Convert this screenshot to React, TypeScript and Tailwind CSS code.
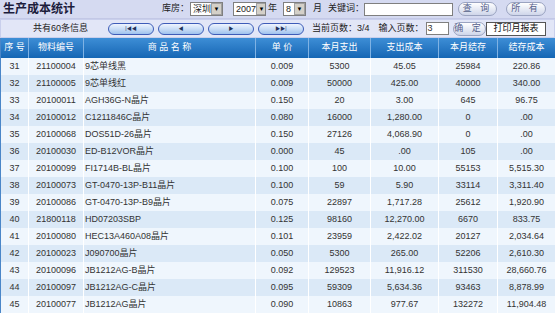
import React from 'react';

type Row = [number, string, string, string, string, string, string, string];

const rows: Row[] = [
  [31, '21100004', '9芯单线黑', '0.009', '5300', '45.05', '25984', '220.86'],
  [32, '21100005', '9芯单线红', '0.009', '50000', '425.00', '40000', '340.00'],
  [33, '20100011', 'AGH36G-N晶片', '0.150', '20', '3.00', '645', '96.75'],
  [34, '20100012', 'C1211846C晶片', '0.080', '16000', '1,280.00', '0', '.00'],
  [35, '20100068', 'DOS51D-26晶片', '0.150', '27126', '4,068.90', '0', '.00'],
  [36, '20100030', 'ED-B12VOR晶片', '0.000', '45', '.00', '105', '.00'],
  [37, '20100099', 'FI1714B-BL晶片', '0.100', '100', '10.00', '55153', '5,515.30'],
  [38, '20100073', 'GT-0470-13P-B11晶片', '0.100', '59', '5.90', '33114', '3,311.40'],
  [39, '20100086', 'GT-0470-13P-B9晶片', '0.075', '22897', '1,717.28', '25612', '1,920.90'],
  [40, '21800118', 'HD07203SBP', '0.125', '98160', '12,270.00', '6670', '833.75'],
  [41, '20100080', 'HEC13A460A08晶片', '0.101', '23959', '2,422.02', '20127', '2,034.64'],
  [42, '20100023', 'J090700晶片', '0.050', '5300', '265.00', '52206', '2,610.30'],
  [43, '20100096', 'JB1212AG-B晶片', '0.092', '129523', '11,916.12', '311530', '28,660.76'],
  [44, '20100097', 'JB1212AG-C晶片', '0.095', '59309', '5,634.36', '93463', '8,878.99'],
  [45, '20100077', 'JB1212AG晶片', '0.090', '10863', '977.67', '132272', '11,904.48'],
];

const heads = ['序 号', '物料编号', '商 品 名 称', '单 价', '本月支出', '支出成本', '本月结存', '结存成本'];
const widths = ['w-[28px]', 'w-[55px]', 'w-[172px]', 'w-[53px]', 'w-[62px]', 'w-[68px]', 'w-[59px]', 'w-[58px]'];

const Select = ({ value, w }: { value: string; w: string }) => (
  <div className={`flex h-[14px] ${w} shrink-0 items-center overflow-hidden whitespace-nowrap border border-[#7f7f7f] bg-white`}>
    <span className="flex-1 pl-[2px] leading-none">{value}</span>
    <span className="flex h-[12px] w-[11px] shrink-0 items-center justify-center border border-[#a0a0a0] bg-[#d4d0c8] text-[6px] text-black">▼</span>
  </div>
);

const PillBtn = ({ children, w }: { children: React.ReactNode; w: string }) => (
  <div className={`flex h-[14px] ${w} items-center justify-center whitespace-nowrap rounded-full border border-[#9aa3c0] bg-gradient-to-b from-[#ffffff] to-[#cfd6ea] text-[#55608a] tracking-[3px]`}>
    {children}
  </div>
);

const NavBtn = ({ icon }: { icon: string }) => (
  <div className="flex h-[12px] w-[46px] items-center justify-center rounded-full border border-[#3e5cb8] bg-gradient-to-b from-[#eef4fe] via-[#c9ddf6] to-[#9fc2ee] text-[5px] leading-none text-[#22325a]">
    {icon}
  </div>
);

export default function App() {
  return (
    <div className="h-[313px] w-[555px] overflow-hidden bg-white text-[9px] text-[#333] [font-family:'Liberation_Sans','Noto_Sans_CJK_SC',sans-serif]">
      <div className="bg-[#d5daf1]">
        <div className="flex h-[19px] items-center whitespace-nowrap border-b border-[#c3c8e6] pr-[9px] pl-[3px]">
          <span className="text-[12px] font-bold text-[#1c1c3c]">生产成本统计</span>
          <div className="ml-auto flex items-center text-[#222]">
            <span className="mr-[1px]">库房：</span>
            <Select value="深圳" w="w-[33px]" />
            <span className="ml-[10px]" />
            <Select value="2007" w="w-[33px]" />
            <span className="ml-[2px] mr-[6px]">年</span>
            <Select value="8" w="w-[23px]" />
            <span className="ml-[7px] mr-[6px]">月</span>
            <span>关键词：</span>
            <div className="h-[13px] w-[89px] border border-[#7f7f7f] bg-white" />
            <div className="ml-[5px]"><PillBtn w="w-[39px]">查 询</PillBtn></div>
            <div className="ml-[9px]"><PillBtn w="w-[40px]">所 有</PillBtn></div>
          </div>
        </div>
        <div className="flex h-[19px] items-center whitespace-nowrap border border-[#c9cfec] bg-[#e2e6f7] pr-[8px]">
          <span className="ml-[32px] w-[75px] text-[#222]">共有60条信息</span>
          <div className="flex gap-[4px]">
            <NavBtn icon="|◀◀" />
            <NavBtn icon="◀" />
            <NavBtn icon="▶" />
            <NavBtn icon="▶▶|" />
          </div>
          <span className="ml-[8px] text-[#222]">当前页数：3/4</span>
          <span className="ml-[9px] text-[#222]">输入页数：</span>
          <div className="ml-[2px] flex h-[13px] w-[23px] items-center border border-[#7f7f7f] bg-white pl-[1px]">3</div>
          <div className="ml-[4px]"><PillBtn w="w-[33px]">确 定</PillBtn></div>
          <div className="ml-auto flex h-[14px] w-[60px] items-center justify-center border border-[#555] bg-white text-[#111]">打印月报表</div>
        </div>
      </div>
      <table className="w-[555px] table-fixed border-collapse border-l border-[#4a86c8]">
        <thead>
          <tr className="h-[20px] bg-gradient-to-b from-[#3d8ed6] to-[#1466b4] text-white">
            {heads.map((h, i) => (
              <th key={i} className={`${widths[i]} border-r border-[#7fb2e4] p-0 text-center font-normal`}>
                {h}
              </th>
            ))}
          </tr>
        </thead>
        <tbody>
          {rows.map((r, ri) => (
            <tr key={r[0]} className={`h-[17px] ${ri % 2 === 0 ? 'bg-[#eff6fd]' : 'bg-[#dbe9f7]'}`}>
              {r.map((c, ci) => (
                <td
                  key={ci}
                  className={`border-r border-[#ffffff] p-0 ${ci === 2 ? 'pl-[1px] text-left' : 'text-center'} whitespace-nowrap`}
                >
                  {c}
                </td>
              ))}
            </tr>
          ))}
        </tbody>
      </table>
    </div>
  );
}
